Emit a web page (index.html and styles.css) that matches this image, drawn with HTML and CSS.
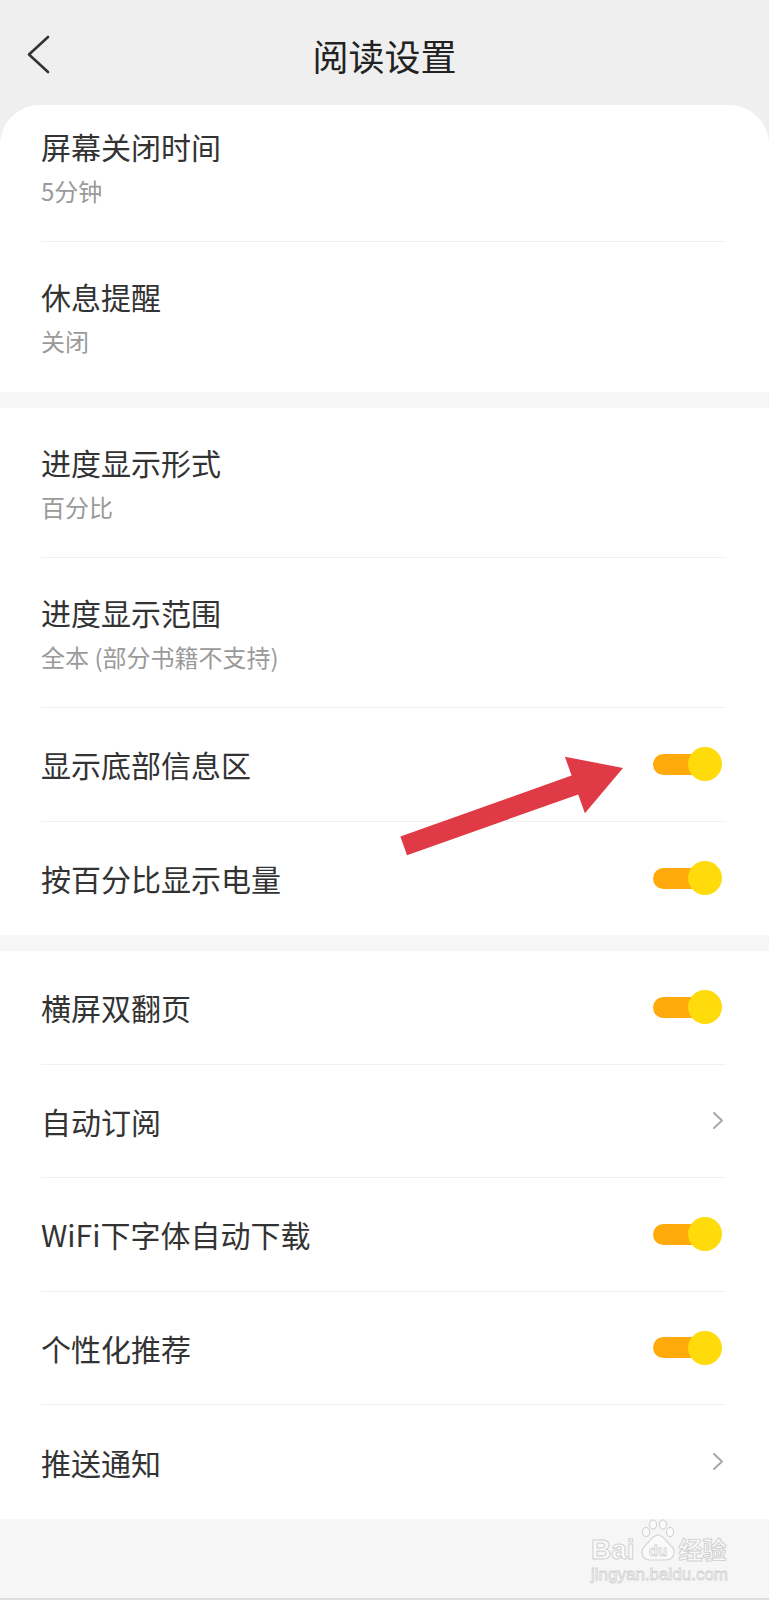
FILE: index.html
```html
<!DOCTYPE html>
<html lang="zh-CN">
<head>
<meta charset="utf-8">
<title>阅读设置</title>
<link rel="stylesheet" href="styles.css">
</head>
<body>
<div class="page">
  <header class="topbar">
    <div class="back">
      <svg width="24" height="40" viewBox="0 0 24 40"><polyline points="21,2 2,19.5 21,37" fill="none" stroke="#333" stroke-width="2.6" stroke-linecap="round" stroke-linejoin="round"/></svg>
    </div>
    <h1 class="title">阅读设置</h1>
    <div></div>
  </header>

  <main class="card">
    <section class="group">
      <div class="row sub first">
        <div class="label">屏幕关闭时间</div>
        <div class="value">5分钟</div>
      </div>
      <div class="row sub">
        <div class="label">休息提醒</div>
        <div class="value">关闭</div>
      </div>
    </section>

    <section class="group">
      <div class="row sub">
        <div class="label">进度显示形式</div>
        <div class="value">百分比</div>
      </div>
      <div class="row sub">
        <div class="label">进度显示范围</div>
        <div class="value">全本 (部分书籍不支持)</div>
      </div>
      <div class="row simple">
        <div class="label">显示底部信息区</div>
        <div class="toggle"><span class="track"></span><span class="knob"></span></div>
      </div>
      <div class="row simple">
        <div class="label">按百分比显示电量</div>
        <div class="toggle"><span class="track"></span><span class="knob"></span></div>
      </div>
    </section>

    <section class="group">
      <div class="row simple">
        <div class="label">横屏双翻页</div>
        <div class="toggle"><span class="track"></span><span class="knob"></span></div>
      </div>
      <div class="row simple">
        <div class="label">自动订阅</div>
        <svg class="chev" width="12" height="19" viewBox="0 0 12 19"><polyline points="2,2 10,9.5 2,17" fill="none" stroke="#a8a8a8" stroke-width="2" stroke-linecap="round" stroke-linejoin="round"/></svg>
      </div>
      <div class="row simple">
        <div class="label">WiFi下字体自动下载</div>
        <div class="toggle"><span class="track"></span><span class="knob"></span></div>
      </div>
      <div class="row simple">
        <div class="label">个性化推荐</div>
        <div class="toggle"><span class="track"></span><span class="knob"></span></div>
      </div>
      <div class="row simple">
        <div class="label">推送通知</div>
        <svg class="chev" width="12" height="19" viewBox="0 0 12 19"><polyline points="2,2 10,9.5 2,17" fill="none" stroke="#a8a8a8" stroke-width="2" stroke-linecap="round" stroke-linejoin="round"/></svg>
      </div>
    </section>
  </main>
</div>

<svg class="annotation" width="769" height="1600" viewBox="0 0 769 1600">
  <polygon points="400.4,836.5 571.6,775.6 564.9,756.7 623,768 584.9,813.3 578.2,794.4 407,855.3" fill="#e03a46"/>
</svg>

<div class="watermark">
  <div class="wm-top">
    <span class="wm-bai">Bai</span>
    <svg class="wm-paw" width="40" height="42" viewBox="0 0 40 42">
      <g fill="#fafafa" stroke="#d4d4d4" stroke-width="1.2">
        <ellipse cx="8" cy="13" rx="3.6" ry="4.6"/>
        <ellipse cx="15" cy="5.5" rx="3.6" ry="4.6"/>
        <ellipse cx="25" cy="5.5" rx="3.6" ry="4.6"/>
        <ellipse cx="32" cy="13" rx="3.6" ry="4.6"/>
        <path d="M20 16 C26 16 29 24 34 28 C38 32 36 41 28 41 L12 41 C4 41 2 32 6 28 C11 24 14 16 20 16 Z"/>
      </g>
      <text x="20" y="37" text-anchor="middle" class="wm-du">du</text>
    </svg>
    <span class="wm-jy">经验</span>
  </div>
  <div class="wm-url">jingyan.baidu.com</div>
</div>
</body>
</html>
```

FILE: styles.css
```css
* {
  box-sizing: border-box;
}

html, body {
  margin: 0;
  padding: 0;
}

body {
  width: 769px;
  height: 1600px;
  position: relative;
  overflow: hidden;
  background: #efefef;
  font-family: "Noto Sans CJK SC", "Noto Sans", sans-serif;
  color: #333;
}

.page {
  display: flex;
  flex-direction: column;
  height: 1600px;
}

.topbar {
  height: 105px;
  flex: none;
  display: grid;
  grid-template-columns: 1fr auto 1fr;
  align-items: center;
  padding-top: 5px;
}

.back {
  padding-left: 27px;
  display: flex;
  align-items: center;
}

.back svg {
  display: block;
}

.title {
  margin: 0;
  font-size: 36px;
  font-weight: 400;
  line-height: 44px;
  color: #222;
}

.card {
  flex: 1;
  background: #f6f6f6;
  border-radius: 40px 40px 0 0;
  overflow: hidden;
  display: flex;
  flex-direction: column;
  gap: 16px;
  border-bottom: 2px solid #dedede;
}

.group {
  background: #fff;
  padding-left: 41px;
  padding-right: 43px;
}

.row {
  border-bottom: 1px solid #f1f1f1;
}

.group .row:last-child {
  border-bottom: none;
}

.row.sub {
  height: 150px;
  padding-bottom: 2px;
  display: flex;
  flex-direction: column;
  justify-content: center;
}

.row.sub.first {
  height: 137px;
  padding-bottom: 14px;
}

.row.simple {
  height: 113.5px;
  display: flex;
  align-items: center;
  justify-content: space-between;
}

.label {
  font-size: 30px;
  line-height: 40px;
  color: #333;
}

.value {
  margin-top: 10px;
  font-size: 24px;
  line-height: 30px;
  color: #9a9a9a;
}

.toggle {
  display: flex;
  align-items: center;
  margin-right: 4px;
}

.track {
  width: 51px;
  height: 21px;
  border-radius: 11px;
  background: #ffa90b;
}

.knob {
  width: 34px;
  height: 34px;
  border-radius: 50%;
  background: #ffdb0b;
  margin-left: -16px;
}

.chev {
  display: block;
  margin-right: 2px;
}

.annotation {
  position: absolute;
  left: 0;
  top: 0;
  pointer-events: none;
}

.watermark {
  position: absolute;
  left: 591px;
  top: 1517px;
  display: flex;
  flex-direction: column;
  pointer-events: none;
}

.wm-top {
  display: flex;
  align-items: flex-end;
  height: 44px;
}

.wm-bai {
  font-family: "Liberation Sans", Arial, sans-serif;
  font-weight: 700;
  font-size: 28px;
  line-height: 28px;
  color: #fafafa;
  -webkit-text-stroke: 1px #d2d2d2;
  margin-bottom: -3px;
}

.wm-paw {
  display: block;
  margin-left: 3px;
}

.wm-du {
  font-family: "Liberation Sans", Arial, sans-serif;
  font-weight: 700;
  font-size: 15px;
  fill: #fafafa;
  stroke: #d2d2d2;
  stroke-width: 0.8px;
}

.wm-jy {
  font-size: 24px;
  line-height: 28px;
  font-weight: 700;
  color: #fafafa;
  -webkit-text-stroke: 1px #d2d2d2;
  margin-left: 1px;
  margin-bottom: -2px;
}

.wm-url {
  margin-top: 4px;
  font-family: "Liberation Sans", Arial, sans-serif;
  font-size: 17px;
  line-height: 20px;
  color: #fafafa;
  -webkit-text-stroke: 0.8px #d2d2d2;
}
```
